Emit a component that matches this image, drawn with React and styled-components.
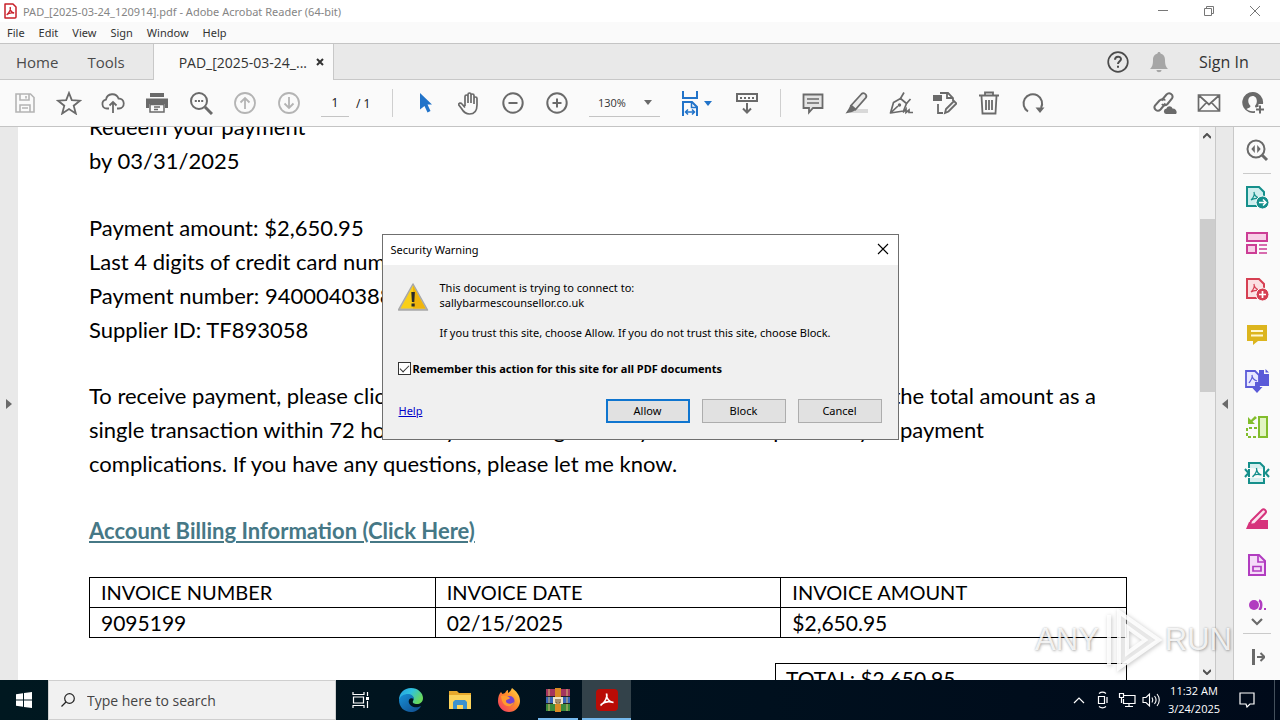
import React from "react";
import styled, { createGlobalStyle, css } from "styled-components";

const UI_FONT = `"Noto Sans", "Open Sans", sans-serif`;
const LABEL_FONT = `"Open Sans", "Noto Sans", sans-serif`;
const DOC_FONT = `Lato, "Open Sans", sans-serif`;

const GlobalStyle = createGlobalStyle`
  *, *::before, *::after { box-sizing: border-box; }
  body { margin: 0; background: #fff; font-family: ${UI_FONT}; overflow: hidden; }
  button, input, select { font: inherit; color: inherit; margin: 0; padding: 0; border: 0; background: none; outline: 0; }
  button { cursor: default; }
  svg { display: block; flex: none; }
  p { margin: 0; }
`;

/* ---------- shell ---------- */
const Desktop = styled.div`
  position: relative;
  display: flex;
  flex-direction: column;
  height: 100vh;
  overflow: hidden;
  font-size: 11px;
`;
const TitleBar = styled.header`
  flex: none;
  display: flex;
  align-items: center;
  height: 22px;
  padding: 0 2px 0 3px;
  background: #fff;
  color: #858585;
`;
const Title = styled.span`
  flex: 1;
  padding-left: 5px;
`;
const WindowButton = styled.button`
  display: grid;
  place-items: center;
  width: 46px;
  height: 22px;
  color: #777;
`;
const MenuBar = styled.nav`
  flex: none;
  display: flex;
  align-items: center;
  gap: 14px;
  height: 22px;
  padding: 0 7px;
  background: #fafafa;
  border-bottom: 1px solid #c4c4c4;
  color: #333;
`;
const TabBar = styled.nav`
  flex: none;
  display: flex;
  align-items: stretch;
  height: 36px;
  background: #e9e9e9;
  border-bottom: 1px solid #c8c8c8;
  color: #4b4b4b;
  font-family: ${LABEL_FONT};
  font-size: 15px;
`;
const TextTab = styled.button`
  padding: 0 13px 0 16px;
`;
const DocumentTab = styled.div`
  display: flex;
  align-items: center;
  gap: 9px;
  width: 181px;
  height: 36px;
  margin-left: 15px;
  padding-left: 25px;
  background: #fafafa;
  border: solid #c8c8c8;
  border-width: 0 1px;
  color: #333;
  font-size: 14px;
`;
const Account = styled.div`
  display: flex;
  align-items: center;
  gap: 20px;
  margin-left: auto;
  padding-right: 26px;
`;
const SignIn = styled.button`
  width: 66px;
  padding-left: 11px;
  color: #333;
  font-size: 16px;
  text-align: left;
`;
const Toolbar = styled.div`
  flex: none;
  display: flex;
  align-items: center;
  height: 47px;
  padding: 0 5px 0 3px;
  background: #fafafa;
  border-bottom: 1px solid #c4c4c4;
`;
const ToolButton = styled.button`
  display: flex;
  align-items: center;
  justify-content: center;
  gap: 5px;
  width: ${(p) => (p.$wide ? 57 : 44)}px;
  height: 44px;
  color: ${(p) => (p.$tone === "blue" ? "#2173c9" : p.$tone === "off" ? "#b4b4b4" : "#6a6a6a")};
`;
const Separator = styled.span`
  width: 1px;
  height: 28px;
  margin: 0 10px 0 11px;
  background: #cfcfcf;
`;
const Grow = styled.span`
  flex: 1;
`;
const PageField = styled.label`
  display: flex;
  align-items: center;
  gap: 7px;
  width: 70px;
  padding-left: 10px;
  color: #222;
  font-size: 12px;
  white-space: nowrap;
`;
const PageInput = styled.input`
  width: 28px;
  height: 27px;
  text-align: center;
  border-bottom: 1px solid #c4c4c4;
`;
const ZoomField = styled.label`
  position: relative;
  display: flex;
  align-items: center;
  width: 71px;
  height: 27px;
  margin: 0 8px 0 10px;
  border-bottom: 1px solid #c4c4c4;
  color: #333;
  font-family: ${LABEL_FONT};
  svg { position: absolute; right: 8px; color: #6a6a6a; pointer-events: none; }
`;
const ZoomSelect = styled.select`
  appearance: none;
  width: 100%;
  height: 100%;
  padding-left: 9px;
`;

/* ---------- workspace ---------- */
const Workspace = styled.main`
  flex: 1;
  min-height: 0;
  display: flex;
`;
const Rail = styled.button`
  flex: none;
  display: grid;
  place-items: center;
  width: 18px;
  background: #e9e9e9;
  color: #6a6a6a;
  ${(p) => p.$side === "right" && css`border: solid #c8c8c8; border-width: 0 1px; width: 19px;`}
`;
const PageView = styled.div`
  flex: 1;
  min-width: 0;
  overflow: hidden;
  background: #fff;
`;
const Sheet = styled.article`
  margin-top: -17px;
  padding: 0 72px 0 71px;
  color: #000;
  font-family: ${DOC_FONT};
  font-size: 22px;
  line-height: 34px;
`;
const Block = styled.section`
  margin-bottom: ${(p) => p.$gap || 33}px;
  white-space: nowrap;
`;
const SplitLine = styled.p`
  display: flex;
  justify-content: space-between;
  width: ${(p) => p.$width}px;
`;
const BillingLink = styled.a`
  display: block;
  color: #467886;
  font-weight: 700;
  text-decoration: underline;
  text-decoration-thickness: 2px;
  text-underline-offset: 2px;
`;
const InvoiceTable = styled.table`
  width: 100%;
  margin-top: 29px;
  border-collapse: collapse;
  table-layout: fixed;
  font-size: 21px;
  line-height: 29px;
  th, td {
    height: 30px;
    padding: 0 11px;
    border: 1px solid #000;
    font-weight: 400;
    text-align: left;
  }
  th { font-size: 20px; }
`;
const TotalBox = styled.div`
  width: 352px;
  margin: 25px 0 0 auto;
  padding-left: 10px;
  border: 1px solid #000;
  font-size: 21px;
  line-height: 30px;
`;
const ScrollTrack = styled.div`
  flex: none;
  display: flex;
  flex-direction: column;
  align-items: center;
  width: 16px;
  padding: 6px 0 5px;
  background: #f0f0f0;
  color: #505050;
`;
const ScrollThumb = styled.div`
  width: 15px;
  height: 32%;
  margin: 80px 0 auto;
  background: #cdcdcd;
`;
const SidePanel = styled.aside`
  flex: none;
  display: flex;
  flex-direction: column;
  align-items: center;
  width: 46px;
  background: #fafafa;
  color: #6a6a6a;
`;
const SideButton = styled.button`
  flex: none;
  display: grid;
  place-items: center;
  width: 46px;
  height: ${(p) => p.$height || 46}px;
  color: ${(p) => p.$color || "inherit"};
`;
const SideRule = styled.hr`
  flex: none;
  width: 28px;
  height: 1px;
  margin: 0;
  border: 0;
  background: #cacaca;
`;

/* ---------- dialog ---------- */
const Overlay = styled.div`
  position: absolute;
  inset: 0;
  display: flex;
  align-items: flex-start;
  justify-content: center;
  padding-top: 234px;
`;
const Dialog = styled.section`
  width: 517px;
  border: 1px solid #6f6f6f;
  background: #f0f0f0;
  color: #000;
  line-height: 15px;
`;
const DialogTitle = styled.header`
  display: flex;
  align-items: center;
  justify-content: space-between;
  height: 30px;
  padding: 0 9px 2px 8px;
  background: #fff;
`;
const DialogBody = styled.div`
  padding: 15px 16px 16px 15px;
`;
const Message = styled.div`
  display: flex;
  align-items: flex-start;
  gap: 10px;
  white-space: pre-line;
`;
const Remember = styled.label`
  display: flex;
  align-items: center;
  gap: 2px;
  height: 16px;
  margin-top: 20px;
  font-weight: 700;
`;
const Tick = styled.input`
  appearance: none;
  display: grid;
  place-items: center;
  width: 13px;
  height: 13px;
  border: 1px solid #333;
  background: #fff;
  &:checked::after {
    content: "";
    width: 9px;
    height: 5px;
    border: solid #333;
    border-width: 0 0 1px 1px;
    transform: translateY(-1px) rotate(-45deg);
  }
`;
const Actions = styled.footer`
  display: flex;
  align-items: center;
  gap: 12px;
  margin-top: 23px;
`;
const HelpLink = styled.a`
  margin-right: auto;
  padding: 0 0 2px 1px;
  color: #0000c8;
`;
const ActionButton = styled.button`
  width: 84px;
  height: 24px;
  padding-bottom: 2px;
  border: ${(p) => (p.$primary ? "2px solid #0f75cf" : "1px solid #adadad")};
  background: #e1e1e1;
`;

/* ---------- watermark ---------- */
const Watermark = styled.div`
  position: absolute;
  right: 48px;
  bottom: 46px;
  display: flex;
  align-items: center;
  height: 68px;
  color: rgba(255, 255, 255, 0.85);
  font-family: "Liberation Sans", sans-serif;
  font-size: 31px;
  text-shadow: 0 0 2px rgba(0, 0, 0, 0.25), 1px 1px 3px rgba(0, 0, 0, 0.25);
  pointer-events: none;
`;

/* ---------- taskbar ---------- */
const Taskbar = styled.footer`
  flex: none;
  display: flex;
  height: 40px;
  background: linear-gradient(90deg, #001820, #00101e 60%, #000a1a);
  color: #fff;
  font-family: ${LABEL_FONT};
`;
const TaskButton = styled.button`
  display: grid;
  place-items: center;
  width: ${(p) => p.$width || 49}px;
  background: ${(p) => (p.$active ? "#33424a" : "none")};
`;
const RunningButton = styled(TaskButton)`
  box-shadow: inset 0 -2px #76b9ed;
`;
const IdleRunningButton = styled(TaskButton)`
  background: linear-gradient(#76b9ed, #76b9ed) center bottom / 40px 2px no-repeat;
`;
const Search = styled.label`
  display: flex;
  align-items: center;
  gap: 12px;
  width: 288px;
  padding-left: 12px;
  background: #f1f1f1;
  border: 1px solid #cfcfcf;
  color: #222;
  font-size: 14px;
`;
const SearchInput = styled.input`
  flex: 1;
  min-width: 0;
  &::placeholder { color: #444; opacity: 1; }
`;
const Tray = styled.div`
  display: flex;
  align-items: center;
  margin-left: auto;
`;
const TrayButton = styled.button`
  display: grid;
  place-items: center;
  width: 24px;
  height: 40px;
`;
const Clock = styled.time`
  width: 62px;
  line-height: 18px;
  text-align: center;
`;
const NoticeButton = styled(TrayButton)`
  width: 50px;
  padding-right: 6px;
  border-right: 1px solid #44505c;
  margin-right: 5px;
`;

/* ---------- drawings ---------- */
const Icon = ({ size = 24, w, h, sw = 2, box, children }) => (
  <svg width={w || size} height={h || size} viewBox={box || `0 0 ${w || size} ${h || size}`} fill="none" stroke="currentColor" strokeWidth={sw} aria-hidden="true">
    {children}
  </svg>
);
const F = { fill: "currentColor", stroke: "none" };
const CaretDown = () => <Icon w={8} h={5}><path d="M0 0h8L4 5z" {...F} /></Icon>;

const PDF_MARK = "M9 7c1 3-1 6-3 8M9 7c0 3 2 5 5 6M6 15c2-1.500 5-2 8-1.500";

const Art = {
  app: <svg width="15" height="16" viewBox="0 0 15 16"><path d="M2 1h8l3 3v10a1 1 0 0 1-1 1H2z" fill="#fff" stroke="#c8202a" strokeWidth="1.500" strokeLinejoin="round" /><path d="M7.200 4c.8 3-1.500 6-3.500 8M7.200 4c-.3 3.500 1.500 5.500 4 6M4 11.500c1.500-1.500 4-2 7-1.500" fill="none" stroke="#c8202a" strokeWidth="1.300" /></svg>,
  save: <Icon sw={1.6}><path d="M3 3h14.500L21 6.500V21H3zM7 3v6h9V3M7 21v-7h10v7M13 5v2.500M9 17h6" /></Icon>,
  star: <Icon w={26} h={24} sw={1.8}><path d="M13 2l2.800 7.200 8.200.5-6.300 5 2.100 7.800L13 18l-6.800 4.500 2.100-7.800L2 9.700l8.200-.5z" /></Icon>,
  cloud: <Icon sw={1.8}><path d="M8 17.500H6a4.500 4.500 0 0 1-1-8.900A6.500 6.500 0 0 1 17.500 7.500 5 5 0 0 1 18 17.500h-2M12 22V11M8.500 14.500L12 11l3.500 3.500" /></Icon>,
  print: <Icon><path d="M5 2h14v4H5z" {...F} /><path d="M1 7.500h22V17h-3v-4H4v4H1z" {...F} /><path d="M5 13.500h14V21H5zM9 16h6M9 18.500h4" strokeWidth="1.500" /></Icon>,
  find: <Icon sw={2}><circle cx="10" cy="10" r="8" /><path d="M16 16l7 7" strokeWidth="3" /><path d="M5.800 9h2v2h-2zM9 9h2v2H9zM12.200 9h2v2h-2z" {...F} /></Icon>,
  up: <Icon sw={1.8}><circle cx="12" cy="12" r="10" /><path d="M12 18V7M7.500 11.500L12 7l4.500 4.500" /></Icon>,
  down: <Icon sw={1.8}><circle cx="12" cy="12" r="10" /><path d="M12 6v11M7.500 12.500L12 17l4.500-4.500" /></Icon>,
  cursor: <Icon w={16} h={22}><path d="M3 1l12 11.500h-4.500l3 6.500-3 1.500-3-6.500L3 17.500z" {...F} /></Icon>,
  hand: <Icon sw={1.7}><path d="M8 15V5.500a1.500 1.500 0 0 1 3 0V12M11 12V3.500a1.500 1.500 0 0 1 3 0V12M14 12V4.500a1.500 1.500 0 0 1 3 0V13M17 13V7.500a1.500 1.500 0 0 1 3 0V14c0 6-3 9-7.500 9-4 0-6-2-8-5.500L1.800 14c-.5-2 2-2.500 3.200-1l3 3.500" strokeLinejoin="round" /></Icon>,
  minus: <Icon><circle cx="12" cy="12" r="9.700" /><path d="M7.500 12h9" /></Icon>,
  plus: <Icon><circle cx="12" cy="12" r="9.700" /><path d="M7.500 12h9M12 7.500v9" /></Icon>,
  fit: <Icon w={18} h={26} sw={2}><path d="M2 1v7h14V1M2 26V12h9l5 5v9" /><path d="M10.500 12v5.500H16M4 22h10M7 19.500L4.500 22 7 24.500M11 19.500l2.500 2.500-2.500 2.500" strokeWidth="1.500" /></Icon>,
  tools: <Icon w={24} h={24} sw={2}><path d="M2 3h20v7H2zM12 12v9M8 17.500l4 4 4-4" /><path d="M5 6h2v2H5zM9 6h2v2H9zM13 6h2v2h-2zM17 6h2v2h-2z" {...F} /></Icon>,
  comment: <Icon sw={1.8}><path d="M2.500 3.500h19V17h-9.500l-4 4.500V17H2.500z" fill="#e4e4e4" /><path d="M6 8h12M6 12h12" strokeWidth="1.300" /></Icon>,
  marker: <Icon sw={1.8}><path d="M8 18h15v4H4z" fill="#d9d9d9" stroke="none" /><path d="M6 14.500L16.500 3c2-2 6 .5 4.500 3.500L10.500 18.500z" fill="#ececec" /><path d="M5.500 14l5.500 5-4 2-6.500 1.500L3.500 18z" {...F} /></Icon>,
  pen: <Icon sw={1.7}><path d="M1.500 22L4.500 11.500l7-4 6 5-3 7.500zM1.500 22l7.500-7" strokeLinejoin="round" /><path d="M11.500 7.500L15 1.500M17.500 12.500l4-4.500" /><circle cx="10.500" cy="14" r="1.700" {...F} /><path d="M14 21.500l3-3.500v3.500l3-2.500v2.500h4" /></Icon>,
  edit: <Icon sw={1.8}><path d="M0 4h9v6H0z" {...F} /><path d="M7 2h8l5 5v3M5 13v9h5M14 2v5h6" /><path d="M12 22l1-4 8-8 2.500 2.500-8 8z" fill="#eee" /></Icon>,
  trash: <Icon sw={1.8}><path d="M2 4.500h20M8 4V1.500h8V4M4.500 5l1 17.500h13L19.500 5M9 9v10M12 9v10M15 9v10" /></Icon>,
  rotate: <Icon sw={2}><path d="M7 20.500A9.300 9.300 0 1 1 20 17" /><path d="M14.500 16.500h9L19 22z" {...F} /></Icon>,
  link: <Icon sw={2}><path d="M8.500 9.500l5-6c3-3 7.500.5 5.500 4l-4.500 5.500c-2 2-4.500 1.500-5.500 0" /><path d="M12.500 12.500l-5 6c-3 3-7.500-.5-5.500-4l4.500-5c2-2 5-1.500 5.500 0" /><path d="M13 23a2.800 2.800 0 0 1 .5-5.500c1-3 5-3 6 0 4 0 5 4 3.500 5.500z" {...F} /></Icon>,
  mail: <Icon sw={1.7}><path d="M1.500 4h21v16h-21zM2 4.500l10 9 10-9M2 19.500l7.500-8M22 19.500l-7.500-8" /></Icon>,
  invite: <Icon><path d="M12 1a10.500 10.500 0 0 0-4 20.300c2 .7 4 .9 6 .5V20c-4 1-7-.5-8.500-2 2-1 4-1.500 4-3-3.500-3-3-10 2-10s5.500 7 2.500 10c0 1 .5 1.500 1.500 2v-1h2v-3h4.500A10.500 10.500 0 0 0 12 1z" {...F} /><path d="M19 14.500v8M15 18.500h8" /></Icon>,
  help: <Icon sw={1.7}><circle cx="12" cy="12" r="9.800" /><path d="M9 9.800c0-4 6-4 6-.8 0 2.200-3 2.200-3 5M12 15.800v2" strokeWidth="2" /></Icon>,
  bell: <Icon w={18} h={22}><path d="M9 1c1 0 1.500.7 1.500 1.500C14 3.500 15 6 15 9c0 5 1 7 3 9H0c2-2 3-4 3-9 0-3 1-5.500 4.500-6.500C7.500 1.700 8 1 9 1zM6.500 19h5c0 3-5 3-5 0z" fill="#a6a6a6" stroke="none" /></Icon>,
};

const PdfPage = ({ tint, box = 24, children }) => (
  <Icon size={box} sw={2}>
    <path d="M2 2h12l5 5v14H2z" fill={tint} />
    <path d={PDF_MARK} strokeWidth="1.200" />
    {children}
  </Icon>
);

const sideTools = [
  ["Export PDF", "#158f8b", <PdfPage tint="#cfeeee"><circle cx="17.500" cy="17.500" r="6.500" fill="currentColor" stroke="#fafafa" strokeWidth="1" /><path d="M14 17.500h7M18 14.500l3 3-3 3" stroke="#fff" strokeWidth="1.500" /></PdfPage>],
  ["Edit PDF", "#cc3d95", <Icon sw={2}><path d="M2 2h20v8H2zM2 14h9v8H2z" fill="#f8cfe7" /><path d="M14 14h8M14 18h8M14 22h8" strokeWidth="1.300" /></Icon>],
  ["Create PDF", "#d63f52", <PdfPage tint="#fbe0e2"><circle cx="17.500" cy="17.500" r="6.500" fill="currentColor" stroke="#fafafa" strokeWidth="1" /><path d="M14 17.500h7M17.500 14v7" stroke="#fff" strokeWidth="1.700" /></PdfPage>],
  ["Comment", "#dcb51e", <Icon><path d="M2 2h20v16h-9l-5 4v-4H2z" {...F} /><path d="M6 8h12M6 12.500h12" stroke="#fff7cf" /></Icon>],
  ["Combine Files", "#5b5bd8", <Icon sw={1.8}><path d="M14 1h5v4h5v12H14z" {...F} /><path d="M20.500 0v3.500H24z" {...F} /><path d="M1 2h9l4 4v12H1z" fill="#e8e8ff" /><path d="M7 6c1 3-1 5-3 8M7 6c0 3 2 5 5 6" strokeWidth="1.200" /><path d="M10 13h4v5h3.500L12 24l-5.500-6H10z" {...F} /></Icon>],
  ["Organize Pages", "#82bd2c", <Icon sw={2}><path d="M14 2h8v20h-8z" fill="#e2f4c3" /><path d="M12 13H2v9h10" strokeDasharray="3 2" /><path d="M3 2v7h7L7.500 6.500 12 3l-2-2-4 4z" {...F} /></Icon>],
  ["Compress PDF", "#158f8b", <Icon w={26} h={24} sw={2}><path d="M5 7V2h11l4 4v2M5 17v5h15v-5M5 8v8M20 8v8" fill="#d6efef" /><path d="M1 8l3.500 4L1 16M25 8l-3.500 4 3.500 4" /><path d="M12.500 7c1 3-1 6-4 9M12.500 7c0 4 2 6 5 7M9 15c2-1.500 5-2 8-1" strokeWidth="1.300" /></Icon>],
  ["Redact", "#d6337c", <Icon sw={2}><path d="M1 22l3-7h7l4-2h8v9z" {...F} /><path d="M6 14L17 3c2-2 5 1 3.500 3L10 17l-5 1z" fill="#fbe3ef" /></Icon>],
  ["Prepare Form", "#b13cc0", <Icon sw={2}><path d="M4 2h10l6 6v14H4z" fill="#f5dcf8" /><path d="M13 2v7h7M8 13.500h8v4.500H8z" strokeWidth="1.700" /></Icon>],
];

const WarningArt = () => (
  <svg width="32" height="32" viewBox="0 0 32 32" aria-hidden="true">
    <path d="M15 4L29.500 30H.5z" fill="#b5b5b5" stroke="#a8a8a8" strokeWidth="1.500" strokeLinejoin="round" />
    <path d="M15 5.500L27.500 28.500h-25z" fill="#f9cf19" />
    <path d="M15 5.500L27.500 28.500H15z" fill="#f0b40c" />
    <path d="M13.300 12h3.600l-.6 10h-2.400zM13.500 23.500h3.200v3h-3.200z" fill="#2b2b2b" />
  </svg>
);

const Edge = () => (
  <svg width="26" height="26" viewBox="0 0 26 26" aria-hidden="true">
    <defs>
      <linearGradient id="edgeTop" x1="0" y1="0" x2="1" y2=".5"><stop stopColor="#249ce0" /><stop offset=".5" stopColor="#2fc2df" /><stop offset="1" stopColor="#68d85c" /></linearGradient>
      <linearGradient id="edgeLow" x1="0" y1="0" x2="1" y2="1"><stop stopColor="#1691d8" /><stop offset="1" stopColor="#114a8b" /></linearGradient>
    </defs>
    <path d="M1 13C1 6 6 1 13 1s12 5 12 10c0 4-3 6-6 6s-5-1-4-3c2-3-1-6-4-6-5 0-9 3-10 5z" fill="url(#edgeTop)" />
    <path d="M1 13c1-4 5-6 9-6 3 0 6 2 6 5-4-2-6 1-5 4s6 6 12 3c-2 4-6 6-10 6C6 25 1 20 1 13z" fill="url(#edgeLow)" />
  </svg>
);
const Folder = () => (
  <svg width="22" height="22" viewBox="0 0 22 22" aria-hidden="true">
    <path d="M0 2h8l2 2h12v16H0z" fill="#e7a92c" /><path d="M0 6h22v14H0z" fill="#fcd45c" />
    <path d="M4 20v-7l2-2h10l2 2v7h-4v-4H8v4z" fill="#3b91cf" />
  </svg>
);
const Firefox = () => (
  <svg width="24" height="24" viewBox="0 0 24 24" aria-hidden="true">
    <defs><linearGradient id="fox" x1="1" y1="0" x2="0" y2="1"><stop stopColor="#ffe14a" /><stop offset=".45" stopColor="#ff8a2a" /><stop offset="1" stopColor="#f0306a" /></linearGradient></defs>
    <path d="M4 4l1.500 2L8 5c1-2 2-3 3-3v3c2-1 3-3 4-5 4 3 8 7 8 13a11 11 0 0 1-22 0c0-4 1-7 3-9z" fill="url(#fox)" />
    <circle cx="12.500" cy="13" r="5" fill="#7542d0" /><path d="M4 8c4-1 7 0 9 2-1 2-4 1-4 3 0 3 5 4 8 1-1 6-12 7-13-6z" fill="#ff9b2e" />
  </svg>
);
const Rar = () => (
  <svg width="24" height="24" viewBox="0 0 24 24" aria-hidden="true">
    <path d="M0 1h24v7H0z" fill="#a4355e" /><path d="M0 9h24v6H0z" fill="#3765b8" /><path d="M0 16h24v7H0z" fill="#3b8a3c" />
    <path d="M3 1v22M21 1v22" stroke="#d9bd72" /><path d="M0 8.500h24M0 15.500h24" stroke="#222" />
    <path d="M9 0h6v24H9z" fill="#d98a24" /><path d="M7 9h10v7H7z" fill="#eee3c8" /><path d="M10 11v4h4v-4M12 11v3" stroke="#5a3a10" fill="none" />
  </svg>
);
const AcrobatTile = () => (
  <svg width="22" height="22" viewBox="0 0 22 22" aria-hidden="true">
    <rect width="22" height="22" rx="4" fill="#b90c06" />
    <path d="M10.500 4.500c1.500 3-1.500 9-6 12M10.500 4.500c-.5 5 3 8.500 7 9M5 15.500c3-2.500 8-3.500 12.500-2" fill="none" stroke="#fff" strokeWidth="1.600" />
  </svg>
);

export default function App() {
  return (
    <Desktop>
      <GlobalStyle />
      <TitleBar>
        {Art.app}
        <Title>PAD_[2025-03-24_120914].pdf - Adobe Acrobat Reader (64-bit)</Title>
        <WindowButton aria-label="Minimize"><Icon size={12} sw={1}><path d="M1 5.500h10" /></Icon></WindowButton>
        <WindowButton aria-label="Restore"><Icon size={12} sw={1}><path d="M1.500 3.500h7v7h-7zM3.500 3V1.500h7v7H9" /></Icon></WindowButton>
        <WindowButton aria-label="Close"><Icon size={12} sw={1}><path d="M1 1l10 10M11 1L1 11" /></Icon></WindowButton>
      </TitleBar>
      <MenuBar>
        {["File", "Edit", "View", "Sign", "Window", "Help"].map((m) => <button key={m}>{m}</button>)}
      </MenuBar>
      <TabBar>
        <TextTab>Home</TextTab>
        <TextTab>Tools</TextTab>
        <DocumentTab>
          <span>PAD_[2025-03-24_...</span>
          <button aria-label="Close tab"><Icon size={8} sw={2}><path d="M1 1l6 6M7 1L1 7" /></Icon></button>
        </DocumentTab>
        <Account>
          {Art.help}
          {Art.bell}
          <SignIn>Sign In</SignIn>
        </Account>
      </TabBar>
      <Toolbar>
        <ToolButton $tone="off" aria-label="Save">{Art.save}</ToolButton>
        <ToolButton aria-label="Star">{Art.star}</ToolButton>
        <ToolButton aria-label="Upload">{Art.cloud}</ToolButton>
        <ToolButton aria-label="Print">{Art.print}</ToolButton>
        <ToolButton aria-label="Find">{Art.find}</ToolButton>
        <ToolButton $tone="off" aria-label="Previous page">{Art.up}</ToolButton>
        <ToolButton $tone="off" aria-label="Next page">{Art.down}</ToolButton>
        <PageField><PageInput defaultValue="1" aria-label="Page" />/ 1</PageField>
        <Separator />
        <ToolButton $tone="blue" aria-label="Select">{Art.cursor}</ToolButton>
        <ToolButton aria-label="Pan">{Art.hand}</ToolButton>
        <ToolButton aria-label="Zoom out">{Art.minus}</ToolButton>
        <ToolButton aria-label="Zoom in">{Art.plus}</ToolButton>
        <ZoomField>
          <ZoomSelect aria-label="Zoom" defaultValue="130%"><option>130%</option></ZoomSelect>
          <CaretDown />
        </ZoomField>
        <ToolButton $wide $tone="blue" aria-label="Fit width">{Art.fit}<CaretDown /></ToolButton>
        <ToolButton aria-label="Page tools">{Art.tools}</ToolButton>
        <Separator />
        <ToolButton aria-label="Comment">{Art.comment}</ToolButton>
        <ToolButton aria-label="Highlight">{Art.marker}</ToolButton>
        <ToolButton aria-label="Sign">{Art.pen}</ToolButton>
        <ToolButton aria-label="Edit">{Art.edit}</ToolButton>
        <ToolButton aria-label="Delete">{Art.trash}</ToolButton>
        <ToolButton aria-label="Rotate">{Art.rotate}</ToolButton>
        <Grow />
        <ToolButton aria-label="Share link">{Art.link}</ToolButton>
        <ToolButton aria-label="Email">{Art.mail}</ToolButton>
        <ToolButton aria-label="Invite">{Art.invite}</ToolButton>
      </Toolbar>
      <Workspace>
        <Rail aria-label="Show navigation pane"><Icon w={6} h={10}><path d="M0 0v10l6-5z" {...F} /></Icon></Rail>
        <PageView>
          <Sheet>
            <Block>
              <p>Redeem your payment</p>
              <p>by 03/31/2025</p>
            </Block>
            <Block $gap={32}>
              <p>Payment amount: $2,650.95</p>
              <p>Last 4 digits of credit card number: 4038</p>
              <p>Payment number: 9400040388</p>
              <p>Supplier ID: TF893058</p>
            </Block>
            <Block>
              <SplitLine $width={1007}><span>To receive payment, please click on the link below</span><span>and charge the total amount as a</span></SplitLine>
              <SplitLine $width={895}><span>single transaction within 72 hours of your message to fully avoid</span><span>the possibility of payment</span></SplitLine>
              <p>complications. If you have any questions, please let me know.</p>
            </Block>
            <BillingLink href="#billing">Account Billing Information (Click Here)</BillingLink>
            <InvoiceTable>
              <thead><tr><th>INVOICE NUMBER</th><th>INVOICE DATE</th><th>INVOICE AMOUNT</th></tr></thead>
              <tbody><tr><td>9095199</td><td>02/15/2025</td><td>$2,650.95</td></tr></tbody>
            </InvoiceTable>
            <TotalBox>TOTAL: $2,650.95</TotalBox>
          </Sheet>
        </PageView>
        <ScrollTrack>
          <Icon w={8} h={6}><path d="M0 5l4-4 4 4" /></Icon>
          <ScrollThumb />
          <Icon w={8} h={6}><path d="M0 1l4 4 4-4" /></Icon>
        </ScrollTrack>
        <Rail $side="right" aria-label="Hide tools pane"><Icon w={6} h={10}><path d="M6 0v10L0 5z" {...F} /></Icon></Rail>
        <SidePanel>
          <SideButton aria-label="Search tools">
            <Icon><circle cx="11" cy="11" r="8.500" /><path d="M17 17l5 5" strokeWidth="3" /><path d="M9.800 7v8l-3.500-4zM12.200 7v8l3.500-4z" {...F} /></Icon>
          </SideButton>
          <SideRule />
          {sideTools.map(([label, color, art]) => <SideButton key={label} $color={color} aria-label={label}>{art}</SideButton>)}
          <SideButton $height={22} $color="#b13cc0" aria-label="More">
            <Icon w={20} h={22} sw={1.5}><circle cx="7" cy="17" r="5" {...F} /><path d="M12 12.500c3 1 3 8 0 9.500" strokeWidth="2.500" /><path d="M17 20h2v2h-2z" {...F} /></Icon>
          </SideButton>
          <SideButton $height={23} aria-label="Scroll down"><Icon w={12} h={8} sw={2.2}><path d="M1 1l5 5 5-5" /></Icon></SideButton>
          <SideRule />
          <SideButton aria-label="Collapse"><Icon w={16} h={18} sw={2}><path d="M4.500 1v16" strokeWidth="3" /><path d="M8 9h7M11.500 5l4 4-4 4" /></Icon></SideButton>
        </SidePanel>
      </Workspace>
      <Watermark>
        ANY
        <svg width="66" height="66" viewBox="0 0 66 66" fill="none" stroke="#fff" strokeOpacity=".85" strokeWidth="4" filter="drop-shadow(1px 1px 2px #0004)">
          <path d="M10 8v50M20 5l40 28-40 28V5zM28 20v26l18-13z" fill="#ffffff66" />
        </svg>
        RUN
      </Watermark>
      <Taskbar>
        <TaskButton $width={48} aria-label="Start"><Icon w={16} h={16}><path d="M0 2.300l7-1v6.200H0zM8 1.100L16 0v7.500H8zM0 8.500h7v6.200l-7-1zM8 8.500h8V16l-8-1.100z" {...F} /></Icon></TaskButton>
        <Search>
          <Icon size={14} box="0 0 14 14" sw={1.2}><circle cx="8.500" cy="5.500" r="4.800" /><path d="M5 9l-4.500 4.500" /></Icon>
          <SearchInput placeholder="Type here to search" aria-label="Search" />
        </Search>
        <TaskButton $width={50} aria-label="Task view"><Icon w={18} h={16} sw={1.2}><path d="M1 0v2.500h11V0M1.500 5h10v6h-10zM1 16v-2.500h11V16M15.500 0v4M15.500 9v7" /><path d="M14 5h3v3h-3z" {...F} /></Icon></TaskButton>
        <TaskButton aria-label="Edge"><Edge /></TaskButton>
        <TaskButton aria-label="File Explorer"><Folder /></TaskButton>
        <TaskButton aria-label="Firefox"><Firefox /></TaskButton>
        <IdleRunningButton aria-label="WinRAR"><Rar /></IdleRunningButton>
        <RunningButton $active aria-label="Acrobat Reader"><AcrobatTile /></RunningButton>
        <Tray>
          <TrayButton aria-label="Hidden icons"><Icon w={12} h={8} sw={1.2}><path d="M1 7l5-5 5 5" /></Icon></TrayButton>
          <TrayButton aria-label="Camera"><Icon w={12} h={18} sw={1.2}><path d="M1.500 5.500h6v7h-6zM10 6v6M2 2.500c2-1.500 5-1.500 7 0M2 15.500c2 1.500 5 1.500 7 0" /></Icon></TrayButton>
          <TrayButton aria-label="Network"><Icon w={18} h={16} sw={1.2}><path d="M6 3.500h11v8H5.500V7M11 12v3M7 14.500h8M1.500 1.500h4v4h-4zM3.500 6v5" /></Icon></TrayButton>
          <TrayButton aria-label="Volume"><Icon w={18} h={16} sw={1.1}><path d="M1 5.500h3L7.500 2v12L4 10.500H1zM10 5.500c1 1.500 1 3.500 0 5M12.500 4c2 2.500 2 5.500 0 8M15 2c3 3.500 3 8.500 0 12" /></Icon></TrayButton>
          <Clock>11:32 AM<br />3/24/2025</Clock>
          <NoticeButton aria-label="Notifications"><Icon w={16} h={16} sw={1.2}><path d="M1 1h14v11h-4l-3 3-1-3H1z" /></Icon></NoticeButton>
        </Tray>
      </Taskbar>
      <Overlay>
        <Dialog role="dialog" aria-label="Security Warning">
          <DialogTitle>
            <span>Security Warning</span>
            <button aria-label="Close dialog"><Icon size={12} sw={1.1}><path d="M1 1l10 10M11 1L1 11" /></Icon></button>
          </DialogTitle>
          <DialogBody>
            <Message>
              <WarningArt />
              <p>{"This document is trying to connect to:\nsallybarmescounsellor.co.uk\n\nIf you trust this site, choose Allow. If you do not trust this site, choose Block."}</p>
            </Message>
            <Remember><Tick type="checkbox" defaultChecked />Remember this action for this site for all PDF documents</Remember>
            <Actions>
              <HelpLink href="#help">Help</HelpLink>
              <ActionButton $primary>Allow</ActionButton>
              <ActionButton>Block</ActionButton>
              <ActionButton>Cancel</ActionButton>
            </Actions>
          </DialogBody>
        </Dialog>
      </Overlay>
    </Desktop>
  );
}
